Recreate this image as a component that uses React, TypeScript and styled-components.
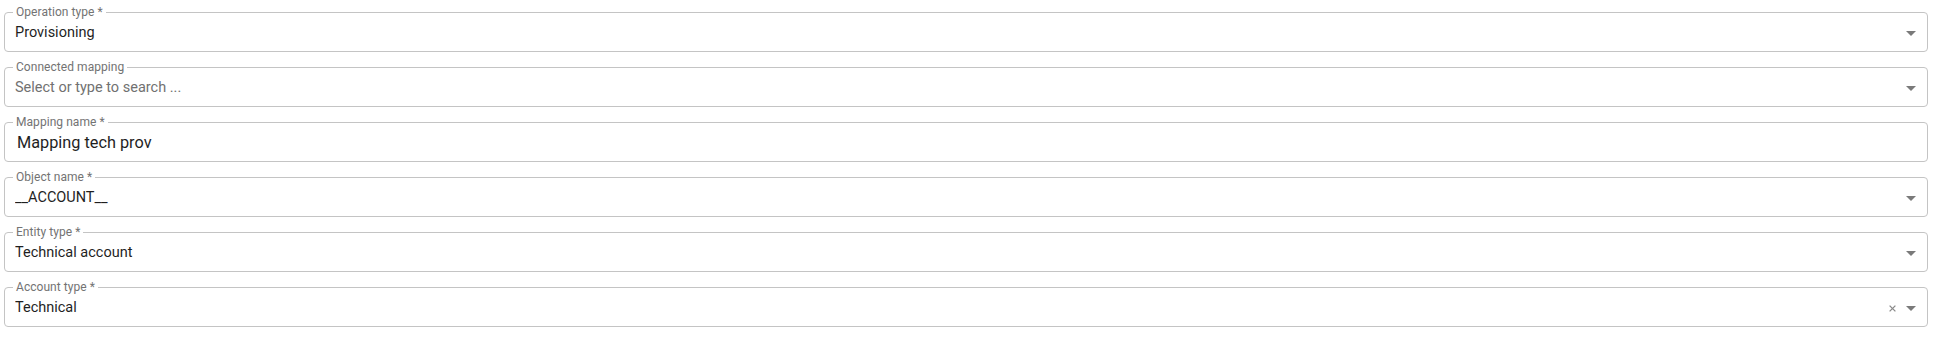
import React from "react";
import styled, { createGlobalStyle } from "styled-components";

const Global = createGlobalStyle`
  html, body { margin: 0; padding: 0; background: #ffffff; }
  body { font-family: Roboto, "Noto Sans", "Liberation Sans", sans-serif; }
`;

const Form = styled.div`
  display: flex;
  flex-direction: column;
  gap: 9px;
  padding: 6px 10px 0 4px;
`;

const Field = styled.fieldset`
  margin: 0;
  min-width: 0;
  padding: 0 11px 9px 8px;
  border: 1px solid #c4c4c4;
  border-radius: 4px;
`;

const Legend = styled.legend`
  padding: 0 3px;
  font-size: 12px;
  line-height: 12px;
  color: #737373;
  letter-spacing: 0.05px;
`;

const Row = styled.div`
  display: flex;
  align-items: center;
  height: 18px;
  margin-top: 6px;
  padding-left: 2px;
`;

const Value = styled.input<{ $large?: boolean }>`
  flex: 1;
  min-width: 0;
  border: 0;
  outline: none;
  padding: 0 0 0 ${(p) => (p.$large ? "2px" : "0")};
  margin: 0;
  background: transparent;
  font-family: Roboto, "Noto Sans", "Liberation Sans", sans-serif;
  font-size: ${(p) => (p.$large ? "16.3px" : "14.5px")};
  line-height: 18px;
  height: 18px;
  color: #1f1f1f;
  &::placeholder {
    color: #717171;
    opacity: 1;
  }
`;

const Icons = styled.div`
  display: flex;
  align-items: center;
  gap: 10px;
`;

const IconSvg = styled.svg`
  display: block;
  flex: none;
`;

const Arrow = () => (
  <IconSvg width="10" height="5" viewBox="0 0 10 5">
    <path d="M0 0 L5 5 L10 0 Z" fill="#7a7a7a" />
  </IconSvg>
);

const Clear = () => (
  <IconSvg width="7" height="7" viewBox="0 0 7 7">
    <path d="M0.6 0.6 L6.4 6.4 M6.4 0.6 L0.6 6.4" stroke="#8a8a8a" strokeWidth="1.3" fill="none" />
  </IconSvg>
);

type FieldDef = {
  label: string;
  value?: string;
  placeholder?: string;
  select?: boolean;
  clearable?: boolean;
  large?: boolean;
};

const fields: FieldDef[] = [
  { label: "Operation type *", value: "Provisioning", select: true },
  { label: "Connected mapping", placeholder: "Select or type to search ...", select: true },
  { label: "Mapping name *", value: "Mapping tech prov", large: true },
  { label: "Object name *", value: "__ACCOUNT__", select: true },
  { label: "Entity type *", value: "Technical account", select: true },
  { label: "Account type *", value: "Technical", select: true, clearable: true },
];

export default function App() {
  return (
    <>
      <Global />
      <Form>
        {fields.map((f) => (
          <Field key={f.label}>
            <Legend>{f.label}</Legend>
            <Row>
              <Value
                $large={f.large}
                readOnly
                value={f.value ?? ""}
                placeholder={f.placeholder}
              />
              {f.select && (
                <Icons>
                  {f.clearable && <Clear />}
                  <Arrow />
                </Icons>
              )}
            </Row>
          </Field>
        ))}
      </Form>
    </>
  );
}
